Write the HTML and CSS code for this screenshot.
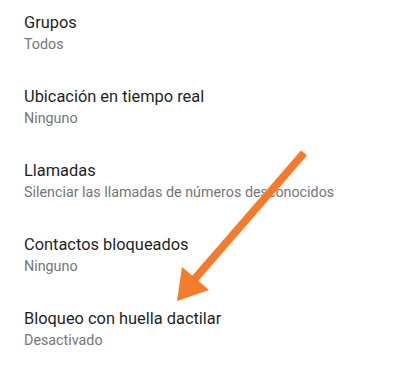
FILE: index.html
```html
<!DOCTYPE html>
<html>
<head>
<meta charset="utf-8">
<link rel="stylesheet" href="styles.css">
</head>
<body>
<div class="list">
  <div class="row"><div class="title">Grupos</div><div class="sub">Todos</div></div>
  <div class="row"><div class="title">Ubicación en tiempo real</div><div class="sub">Ninguno</div></div>
  <div class="row"><div class="title">Llamadas</div><div class="sub">Silenciar las llamadas de números desconocidos</div></div>
  <div class="row"><div class="title">Contactos bloqueados</div><div class="sub">Ninguno</div></div>
  <div class="row"><div class="title">Bloqueo con huella dactilar</div><div class="sub">Desactivado</div></div>
</div>
<svg class="arrow" width="400" height="374" viewBox="0 0 400 374">
  <line x1="304" y1="153" x2="192" y2="282" stroke="#f47a2c" stroke-width="8" stroke-linecap="butt"/>
  <polygon points="177,301 182,267 209,290" fill="#f47a2c"/>
</svg>
</body>
</html>
```
FILE: styles.css
```css
html, body {
  margin: 0;
  padding: 0;
  background: #ffffff;
}
body {
  position: relative;
  width: 400px;
  height: 374px;
  overflow: hidden;
  font-family: Roboto, "Noto Sans", sans-serif;
}
.list {
  display: flex;
  flex-direction: column;
}
.row {
  height: 74px;
  box-sizing: border-box;
  padding: 13px 24px 0 24px;
  display: flex;
  flex-direction: column;
  gap: 1px;
}
.title {
  font-size: 16.4px;
  line-height: 20px;
  color: #1f1f1f;
  white-space: nowrap;
}
.sub {
  font-size: 14.3px;
  line-height: 20px;
  color: #767676;
  white-space: nowrap;
}
.arrow {
  position: absolute;
  left: 0;
  top: 0;
  pointer-events: none;
}
```
